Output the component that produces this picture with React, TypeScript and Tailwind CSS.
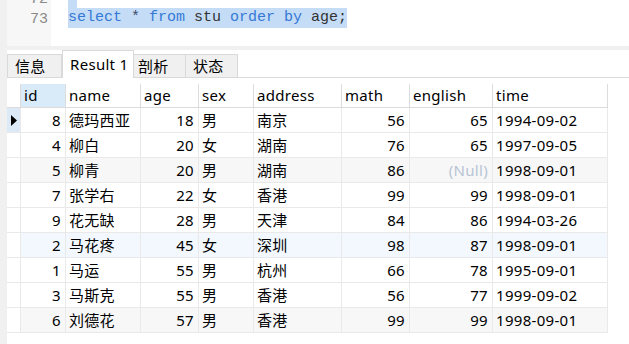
import React from 'react'

type Row = {
  id: number
  name: string
  age: number
  sex: string
  address: string
  math: number
  english: number | null
  time: string
}

const rows: Row[] = [
  { id: 8, name: '德玛西亚', age: 18, sex: '男', address: '南京', math: 56, english: 65, time: '1994-09-02' },
  { id: 4, name: '柳白', age: 20, sex: '女', address: '湖南', math: 76, english: 65, time: '1997-09-05' },
  { id: 5, name: '柳青', age: 20, sex: '男', address: '湖南', math: 86, english: null, time: '1998-09-01' },
  { id: 7, name: '张学右', age: 22, sex: '女', address: '香港', math: 99, english: 99, time: '1998-09-01' },
  { id: 9, name: '花无缺', age: 28, sex: '男', address: '天津', math: 84, english: 86, time: '1994-03-26' },
  { id: 2, name: '马花疼', age: 45, sex: '女', address: '深圳', math: 98, english: 87, time: '1998-09-01' },
  { id: 1, name: '马运', age: 55, sex: '男', address: '杭州', math: 66, english: 78, time: '1995-09-01' },
  { id: 3, name: '马斯克', age: 55, sex: '男', address: '香港', math: 56, english: 77, time: '1999-09-02' },
  { id: 6, name: '刘德花', age: 57, sex: '男', address: '香港', math: 99, english: 99, time: '1998-09-01' },
]

const headers = ['id', 'name', 'age', 'sex', 'address', 'math', 'english', 'time']
const gridCols = 'grid grid-cols-[14px_45px_75px_58px_55px_88px_68px_83px_115px] w-[601px]'
const cell = 'h-[25px] flex items-center border-r border-b border-[#e9e9e9] whitespace-nowrap overflow-hidden'
const num = `${cell} justify-end pr-[4px]`
const txt = `${cell} pl-[3px]`

// every third row is tinted, the hovered one is pale blue
function rowBg(i: number) {
  if (i === 5) return 'bg-[#f2f8fd]'
  if (i === 2 || i === 8) return 'bg-[#f7f7f7]'
  return 'bg-white'
}

export default function App() {
  return (
    <div
      className="w-[629px] h-[344px] bg-white flex overflow-hidden text-[15px] tracking-[0.3px] text-black"
      style={{ fontFamily: '"Noto Sans", "Noto Sans CJK SC", sans-serif' }}
    >
      <div className="w-[7px] shrink-0 bg-[#f0f0f0]" />
      <div className="flex-1 flex flex-col">
        {/* SQL editor */}
        <div
          className="h-[46px] flex overflow-hidden tracking-normal"
          style={{ fontFamily: '"Liberation Mono", monospace' }}
        >
          <div className="w-[44px] shrink-0 bg-[#f7f7f7] text-[#8a8a8a] text-right pr-[3px] -mt-[10px] leading-[20px]">
            <div>72</div>
            <div>73</div>
          </div>
          <div className="pl-[17px] -mt-[10px] leading-[20px] whitespace-pre">
            <div className="h-[18px] flex items-end">
              <span className="w-[9px] h-[8px] bg-[#c4dcf6]" />
            </div>
            <div className="inline-block bg-[#c4dcf6]">
              <span className="text-[#3479d6]">select</span>
              <span className="text-[#3a4a6a]"> * </span>
              <span className="text-[#3479d6]">from</span>
              <span className="text-[#333]"> stu </span>
              <span className="text-[#3479d6]">order by</span>
              <span className="text-[#333]"> age;</span>
            </div>
          </div>
        </div>
        <div className="h-[4px] bg-[#f0f0f0] -ml-[7px]" />

        {/* result tabs */}
        <div className="h-[28px] flex items-end border-b border-[#d9d9d9]">
          <div className="w-[55px] h-[24px] -mb-px flex items-center pl-[7px] bg-[#f0f0f0] border border-[#d9d9d9]">信息</div>
          <div className="w-[72px] h-[28px] -mb-px flex items-center pl-[7px] bg-white border border-b-0 border-[#d9d9d9]">Result 1</div>
          <div className="w-[52px] h-[24px] -mb-px flex items-center pl-[4px] bg-[#f0f0f0] border border-l-0 border-[#d9d9d9]">剖析</div>
          <div className="w-[52px] h-[24px] -mb-px flex items-center pl-[7px] bg-[#f0f0f0] border border-l-0 border-[#d9d9d9]">状态</div>
        </div>

        {/* data grid */}
        <div className="mt-[6px]">
          <div className={gridCols}>
            <div className="h-[24px] border-r border-b border-[#dcdcdc] bg-white" />
            {headers.map((h, i) => (
              <div
                key={h}
                className={`h-[24px] flex items-center pl-[3px] border-r border-b border-[#dcdcdc] ${i === 0 ? 'bg-[#d9ebf9]' : 'bg-white'}`}
              >
                {h}
              </div>
            ))}
          </div>
          {rows.map((r, i) => (
            <div key={r.id} className={gridCols}>
              <div className={`${cell} justify-center ${i === 0 ? 'bg-[#dceaf8]' : 'bg-white'}`}>
                {i === 0 && (
                  <svg width="6" height="11" viewBox="0 0 6 11">
                    <path d="M0 0 L6 5.5 L0 11 Z" fill="#000" />
                  </svg>
                )}
              </div>
              <div className={`${num} ${rowBg(i)}`}>{r.id}</div>
              <div className={`${txt} ${rowBg(i)}`}>{r.name}</div>
              <div className={`${num} ${rowBg(i)}`}>{r.age}</div>
              <div className={`${txt} ${rowBg(i)}`}>{r.sex}</div>
              <div className={`${txt} ${rowBg(i)}`}>{r.address}</div>
              <div className={`${num} ${rowBg(i)}`}>{r.math}</div>
              <div className={`${num} ${rowBg(i)}`}>
                {r.english === null ? <span className="text-[#b8c4d6]">(Null)</span> : r.english}
              </div>
              <div className={`${txt} ${rowBg(i)}`}>{r.time}</div>
            </div>
          ))}
        </div>
      </div>
    </div>
  )
}
